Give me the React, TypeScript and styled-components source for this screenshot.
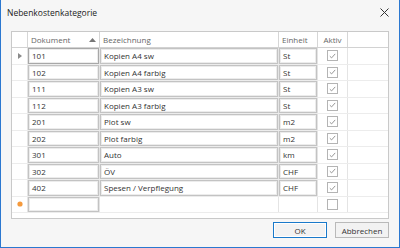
import * as React from 'react';
import styled, { createGlobalStyle } from 'styled-components';

const GlobalStyle = createGlobalStyle`
  html, body {
    margin: 0;
    padding: 0;
    background: #f5f5f5;
  }
  * {
    box-sizing: border-box;
  }
`;

const COLS = '16px 72px 179px 39px 30px 1fr';

const Window = styled.div`
  width: 400px;
  height: 248px;
  display: flex;
  flex-direction: column;
  background: #f6f6f6;
  border: 1px solid #2b78d0;
  border-top: none;
  font-family: 'Open Sans', 'Noto Sans', sans-serif;
  color: #333;
`;

const TitleBar = styled.div`
  height: 25px;
  display: flex;
  align-items: center;
  justify-content: space-between;
  padding: 0 10px 0 6px;
  font-size: 8.5px;
  color: #222;
`;

const Body = styled.div`
  flex: 1;
  display: flex;
  flex-direction: column;
  padding: 6px 10px 9px 10px;
  gap: 3px;
`;

const Grid = styled.div`
  height: 188px;
  background: #fff;
  border: 1px solid #c9c9c9;
  display: flex;
  flex-direction: column;
`;

const Row = styled.div<{ $header?: boolean }>`
  display: grid;
  grid-template-columns: ${COLS};
  height: ${p => (p.$header ? '16px' : '16.5px')};
  border-bottom: 1px solid ${p => (p.$header ? '#d2d2d2' : '#ececec')};
`;

const HeadCell = styled.div<{ $last?: boolean }>`
  display: flex;
  align-items: center;
  justify-content: space-between;
  padding: 0 3px;
  font-size: 8px;
  color: #666;
  border-right: ${p => (p.$last ? 'none' : '1px solid #d6d6d6')};
`;

const Cell = styled.div<{ $last?: boolean; $center?: boolean }>`
  display: flex;
  align-items: stretch;
  justify-content: ${p => (p.$center ? 'center' : 'stretch')};
  border-right: ${p => (p.$last ? 'none' : '1px solid #e4e4e4')};
  padding: 0;
  min-width: 0;
`;

const IndicatorCell = styled.div`
  display: flex;
  align-items: center;
  justify-content: center;
  border-right: 1px solid #e4e4e4;
`;

const Editor = styled.div<{ $focus?: boolean }>`
  flex: 1;
  display: flex;
  align-items: center;
  margin: 0 0 0 0;
  padding: 0 3px;
  border: 1px solid ${p => (p.$focus ? '#a8a8a8' : '#c3c3c3')};
  box-shadow: inset 0 0 0 1px #ececec;
  font-size: 8px;
  color: #333;
  white-space: nowrap;
  overflow: hidden;
`;

const CheckBox = styled.div`
  align-self: center;
  width: 11px;
  height: 11px;
  border: 1px solid #b4b4b4;
  background: #fff;
  display: flex;
  align-items: center;
  justify-content: center;
`;

const Footer = styled.div`
  display: flex;
  justify-content: flex-end;
  gap: 8px;
`;

const Button = styled.button<{ $primary?: boolean }>`
  width: 54px;
  height: 16px;
  padding: 0;
  font-family: 'Open Sans', 'Noto Sans', sans-serif;
  font-size: 8px;
  color: #333;
  background: #f2f2f2;
  border: 1px solid ${p => (p.$primary ? '#1979ca' : '#b9b9b9')};
  box-shadow: ${p => (p.$primary ? 'inset 0 0 0 1px #fff' : 'none')};
`;

type Item = { doc: string; name: string; unit: string };

const items: Item[] = [
  { doc: '101', name: 'Kopien A4 sw', unit: 'St' },
  { doc: '102', name: 'Kopien A4 farbig', unit: 'St' },
  { doc: '111', name: 'Kopien A3 sw', unit: 'St' },
  { doc: '112', name: 'Kopien A3 farbig', unit: 'St' },
  { doc: '201', name: 'Plot sw', unit: 'm2' },
  { doc: '202', name: 'Plot farbig', unit: 'm2' },
  { doc: '301', name: 'Auto', unit: 'km' },
  { doc: '302', name: 'ÖV', unit: 'CHF' },
  { doc: '402', name: 'Spesen / Verpflegung', unit: 'CHF' }
];

const Check = () => (
  <svg width="7" height="6" viewBox="0 0 7 6">
    <path d="M0.8 3.2 L2.6 4.9 L6.2 0.9" fill="none" stroke="#8a8a8a" strokeWidth="0.9" />
  </svg>
);

const CloseIcon = () => (
  <svg width="9" height="9" viewBox="0 0 9 9">
    <path d="M0.5 0.5 L8.5 8.5 M8.5 0.5 L0.5 8.5" stroke="#333" strokeWidth="1" />
  </svg>
);

const SortArrow = () => (
  <svg width="7" height="4" viewBox="0 0 7 4">
    <path d="M0 4 L3.5 0 L7 4 Z" fill="#777" />
  </svg>
);

const RowPointer = () => (
  <svg width="4" height="6" viewBox="0 0 4 6">
    <path d="M0 0 L4 3 L0 6 Z" fill="#8a8a8a" />
  </svg>
);

const NewRowMark = () => (
  <svg width="6" height="6" viewBox="0 0 6 6">
    <circle cx="3" cy="3" r="2.6" fill="#f59a3c" />
  </svg>
);

export default function App() {
  return (
    <>
      <GlobalStyle />
      <Window>
        <TitleBar>
          <span>Nebenkostenkategorie</span>
          <CloseIcon />
        </TitleBar>
        <Body>
          <Grid>
            <Row $header>
              <HeadCell />
              <HeadCell>
                Dokument
                <SortArrow />
              </HeadCell>
              <HeadCell>Bezeichnung</HeadCell>
              <HeadCell>Einheit</HeadCell>
              <HeadCell style={{ justifyContent: 'center' }}>Aktiv</HeadCell>
              <HeadCell $last />
            </Row>
            {items.map((it, i) => (
              <Row key={it.doc}>
                <IndicatorCell>{i === 0 && <RowPointer />}</IndicatorCell>
                <Cell>
                  <Editor $focus={i === 0}>{it.doc}</Editor>
                </Cell>
                <Cell>
                  <Editor>{it.name}</Editor>
                </Cell>
                <Cell>
                  <Editor>{it.unit}</Editor>
                </Cell>
                <Cell $center>
                  <CheckBox>
                    <Check />
                  </CheckBox>
                </Cell>
                <Cell $last />
              </Row>
            ))}
            <Row>
              <IndicatorCell>
                <NewRowMark />
              </IndicatorCell>
              <Cell>
                <Editor />
              </Cell>
              <Cell />
              <Cell />
              <Cell $center>
                <CheckBox />
              </Cell>
              <Cell $last />
            </Row>
          </Grid>
          <Footer>
            <Button $primary>OK</Button>
            <Button>Abbrechen</Button>
          </Footer>
        </Body>
      </Window>
    </>
  );
}
